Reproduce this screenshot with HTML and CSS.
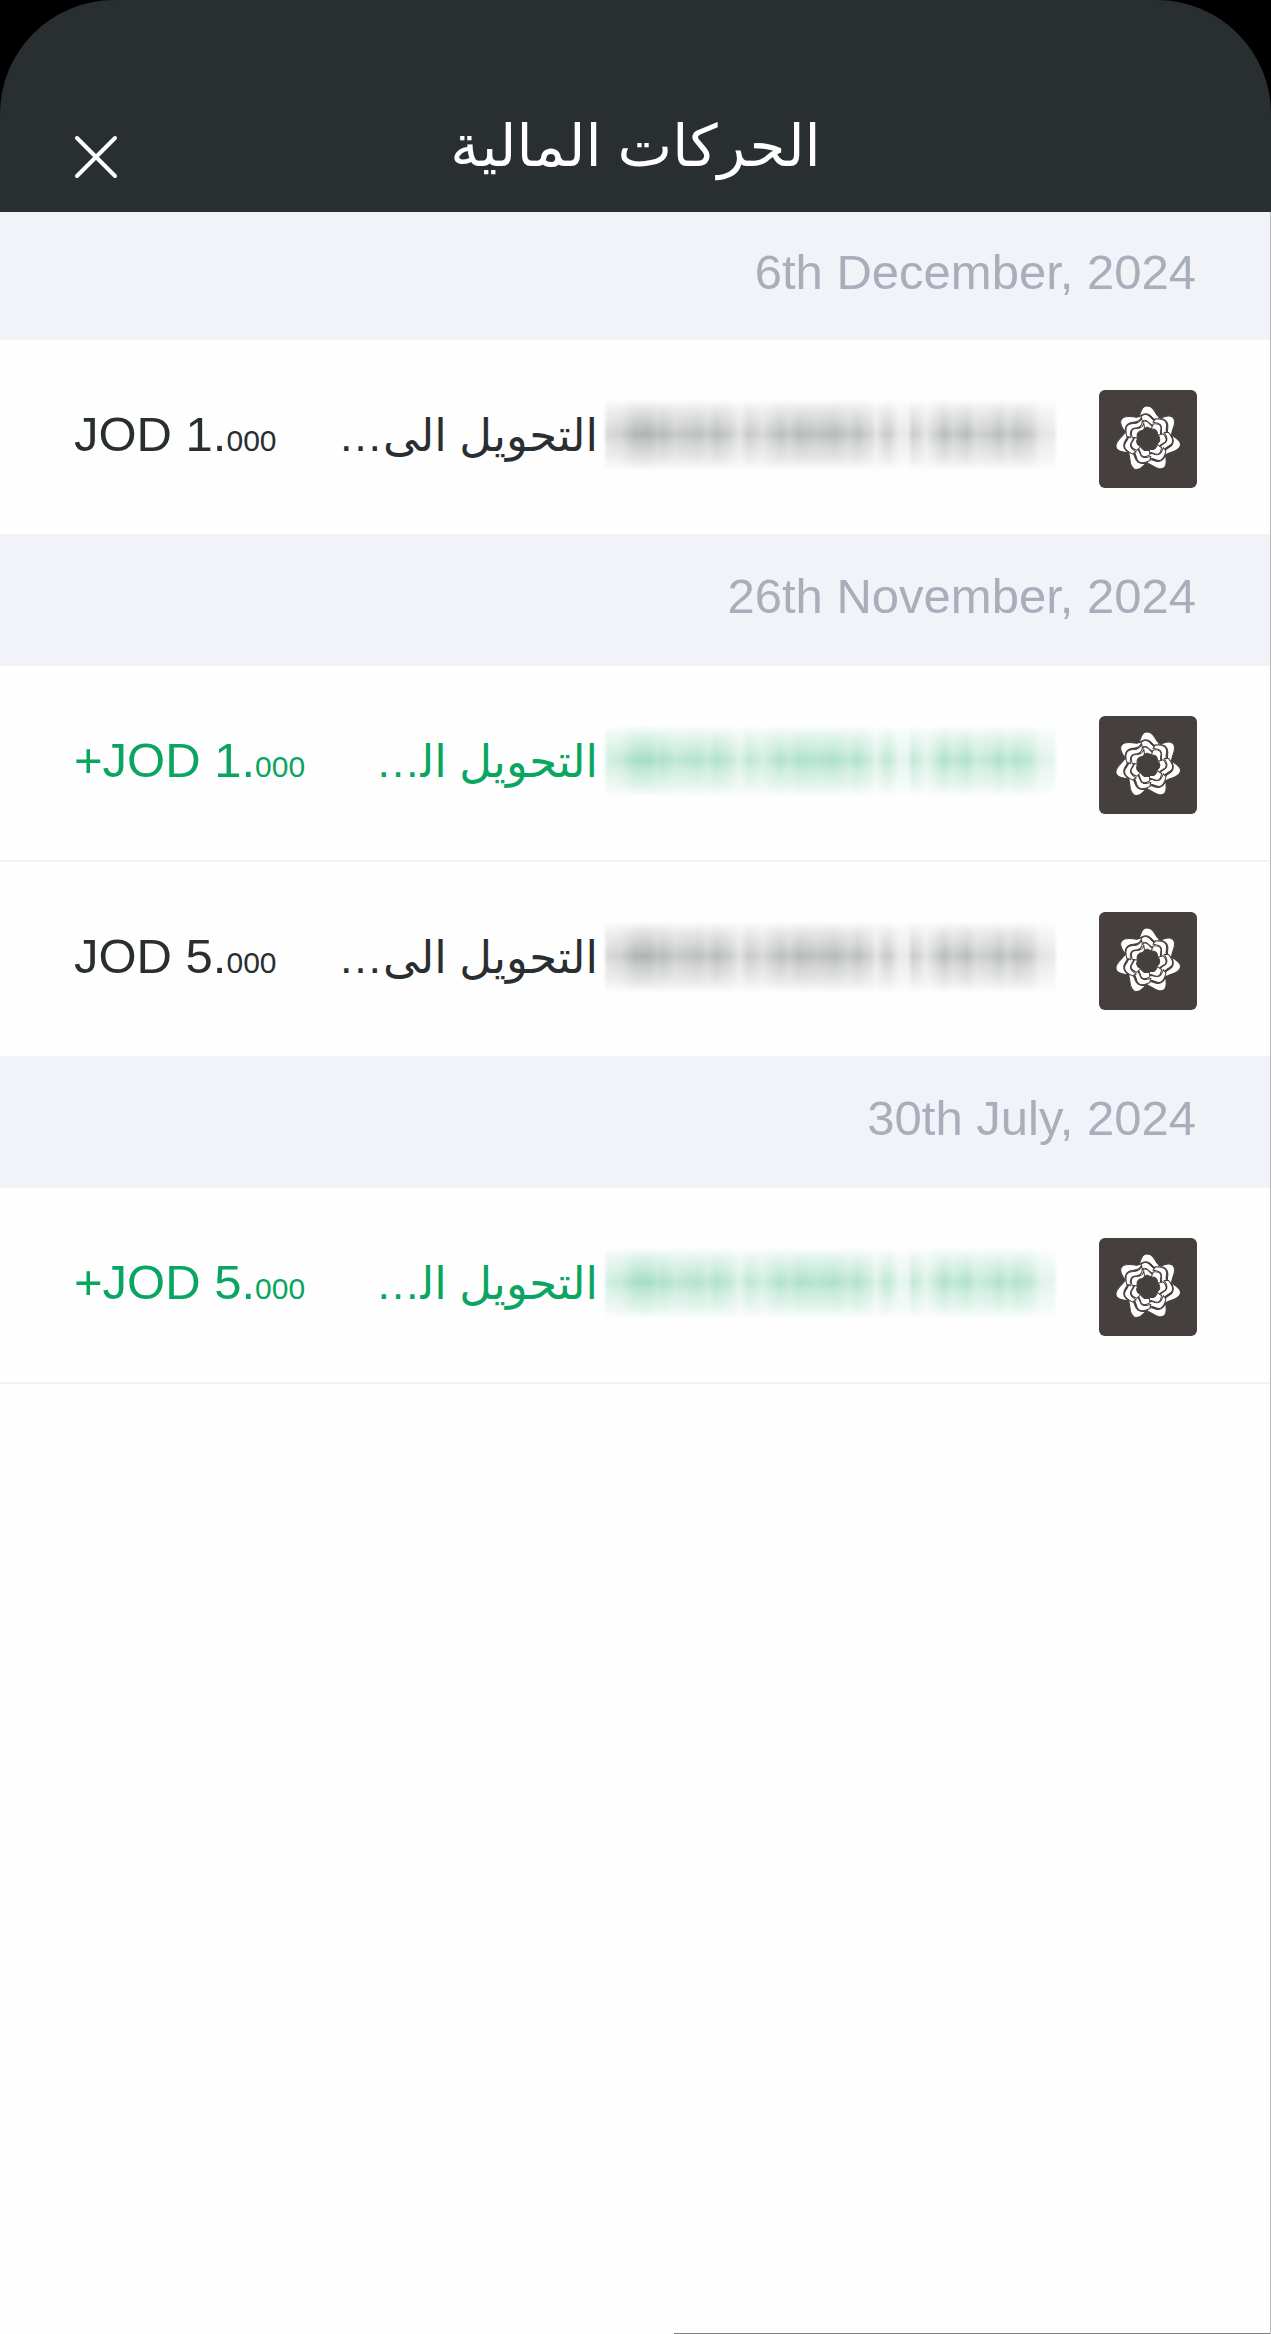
FILE: index.html
```html
<!DOCTYPE html>
<html lang="ar" dir="rtl">
<head>
    <meta charset="UTF-8">
    <meta name="viewport" content="width=device-width, initial-scale=1.0">
    <title>الحركات المالية</title>
    <link rel="stylesheet" href="styles.css">
</head>
<body>
    <svg class="sprite" aria-hidden="true">
        <symbol id="flower" viewBox="-49 -49 98 98">
            <g id="petal">
                <path d="M-10,-21 C-7,-24.5 -7,-33 -1,-33 C5,-33 7,-26 10,-22.5 C12,-20.5 13,-20 14.5,-19.5 C11,-17.5 7,-18.5 4,-22 C0,-26.5 -5,-26.5 -10,-21Z"/>
                <path d="M-11,-18.5 C-5,-26 -1,-26 3,-21 C6,-17.5 9,-17 12.5,-18 C9,-13.5 5,-12.5 2,-15.5 C-2,-20 -5,-19.5 -10,-14.5Z"/>
                <path d="M-8.5,-13.5 C-5,-19 -1.5,-19 1,-15.5 C4,-12 6,-11.5 9.5,-13 C7,-9.5 5,-8.5 3,-10 C0,-12.5 -3,-12.5 -6,-9Z"/>
            </g>
            <use href="#petal" transform="rotate(51.43)"/>
            <use href="#petal" transform="rotate(102.86)"/>
            <use href="#petal" transform="rotate(154.29)"/>
            <use href="#petal" transform="rotate(205.71)"/>
            <use href="#petal" transform="rotate(257.14)"/>
            <use href="#petal" transform="rotate(308.57)"/>
        </symbol>
    </svg>

    <div class="screen">
        <div class="top">
            <header class="header">
                <h1>الحركات المالية</h1>
                <button class="close" type="button" aria-label="إغلاق">
                    <svg viewBox="0 0 44 44"><path d="M3 3L41 41M41 3L3 41"/></svg>
                </button>
            </header>
        </div>

        <main class="list">
            <h2 class="date" dir="ltr">6th December, 2024</h2>
            <div class="row">
                <svg class="logo"><use href="#flower"/></svg>
                <span class="hidden-name"></span>
                <span class="name">التحويل الى…</span>
                <span class="amount" dir="ltr">JOD 1.<small>000</small></span>
            </div>

            <h2 class="date" dir="ltr">26th November, 2024</h2>
            <div class="row plus">
                <svg class="logo"><use href="#flower"/></svg>
                <span class="hidden-name"></span>
                <span class="name">التحويل ال&zwj;…</span>
                <span class="amount" dir="ltr">+JOD 1.<small>000</small></span>
            </div>
            <div class="row">
                <svg class="logo"><use href="#flower"/></svg>
                <span class="hidden-name"></span>
                <span class="name">التحويل الى…</span>
                <span class="amount" dir="ltr">JOD 5.<small>000</small></span>
            </div>

            <h2 class="date" dir="ltr">30th July, 2024</h2>
            <div class="row plus">
                <svg class="logo"><use href="#flower"/></svg>
                <span class="hidden-name"></span>
                <span class="name">التحويل ال&zwj;…</span>
                <span class="amount" dir="ltr">+JOD 5.<small>000</small></span>
            </div>
        </main>
    </div>
</body>
</html>
```
FILE: styles.css
```css
* {
    margin: 0;
    padding: 0;
    box-sizing: border-box;
}
body {
    background-color: #fefefe;
    font-family: "Liberation Sans", "DejaVu Sans", sans-serif;
    font-size: 49px;
    color: #292e31;
}
.sprite {
    position: absolute;
    width: 0;
    height: 0;
}
.screen {
    display: flex;
    flex-direction: column;
    min-height: 100vh;
    background: linear-gradient(to left, #808080 47%, transparent 47%) bottom / 100% 1px no-repeat;
}
.top {
    background-color: #000;
}
.header {
    display: grid;
    grid-template-columns: 44px 1fr 44px;
    align-items: end;
    height: 212px;
    padding: 0 74px 33px;
    border-radius: 114px 114px 0 0;
    background-color: #292e31;
    color: #fff;
}
.header h1 {
    grid-column: 2;
    font-size: 58px;
    font-weight: normal;
    line-height: 66px;
    text-align: center;
}
.close {
    width: 44px;
    height: 44px;
    border: none;
    background: none;
    color: inherit;
    cursor: pointer;
}
.close svg {
    display: block;
    fill: none;
    stroke: currentColor;
    stroke-width: 4;
    stroke-linecap: round;
}
.list {
    flex: 1;
    border-right: 1px solid #b8b8b8;
}
.date {
    height: 130px;
    padding: 32px 74px 0;
    background-color: #f2f3f8;
    color: #a9aebb;
    font-weight: normal;
    font-size: 49px;
    line-height: 56px;
    text-align: right;
}
.date:first-child {
    height: 128px;
}
.row {
    display: flex;
    align-items: center;
    height: 196px;
    padding: 4px 73px 0 74px;
    border-bottom: 2px solid #f2f3f8;
}
.plus {
    color: #09a561;
}
.logo {
    flex: none;
    width: 98px;
    height: 98px;
    margin-left: 41px;
    border-radius: 6px;
    background-color: #453f3d;
    fill: #fff;
    stroke: #453f3d;
    stroke-width: 1;
}
/* smudged account name, takes the colour of its row */
.hidden-name {
    flex: 0 1 455px;
    height: 72px;
    margin-bottom: 8px;
    background-color: currentColor;
    mask-image:
        linear-gradient(to bottom, transparent, rgba(0, 0, 0, 0.35) 14%, rgba(0, 0, 0, 0.7) 34%, #000 49%, rgba(0, 0, 0, 0.7) 62%, rgba(0, 0, 0, 0.35) 84%, transparent),
        linear-gradient(to right,
            transparent, rgba(0, 0, 0, 0.18) 1%, rgba(0, 0, 0, 0.22) 4%, rgba(0, 0, 0, 0.35) 7%,
            rgba(0, 0, 0, 0.37) 10%, rgba(0, 0, 0, 0.3) 12%, rgba(0, 0, 0, 0.33) 13%, rgba(0, 0, 0, 0.25) 16%,
            rgba(0, 0, 0, 0.3) 21%, rgba(0, 0, 0, 0.25) 23%, rgba(0, 0, 0, 0.32) 25%, rgba(0, 0, 0, 0.24) 28%,
            rgba(0, 0, 0, 0.14) 30%, rgba(0, 0, 0, 0.25) 32%, rgba(0, 0, 0, 0.24) 33%, rgba(0, 0, 0, 0.18) 35%,
            rgba(0, 0, 0, 0.31) 39%, rgba(0, 0, 0, 0.26) 41%, rgba(0, 0, 0, 0.33) 43%, rgba(0, 0, 0, 0.29) 47%,
            rgba(0, 0, 0, 0.33) 51%, rgba(0, 0, 0, 0.25) 54%, rgba(0, 0, 0, 0.31) 56%, rgba(0, 0, 0, 0.2) 59%,
            rgba(0, 0, 0, 0.12) 60%, rgba(0, 0, 0, 0.24) 62%, rgba(0, 0, 0, 0.24) 63%, rgba(0, 0, 0, 0.1) 65%,
            rgba(0, 0, 0, 0.1) 67%, rgba(0, 0, 0, 0.24) 68%, rgba(0, 0, 0, 0.22) 69%, rgba(0, 0, 0, 0.12) 71%,
            rgba(0, 0, 0, 0.32) 75%, rgba(0, 0, 0, 0.24) 77%, rgba(0, 0, 0, 0.32) 80%, rgba(0, 0, 0, 0.22) 82%,
            rgba(0, 0, 0, 0.25) 85%, rgba(0, 0, 0, 0.32) 87%, rgba(0, 0, 0, 0.24) 89%, rgba(0, 0, 0, 0.31) 91%,
            rgba(0, 0, 0, 0.25) 94%, rgba(0, 0, 0, 0.13) 96%, rgba(0, 0, 0, 0.1) 99%, transparent);
    mask-composite: intersect;
}
.name {
    flex: 1;
    margin-right: 5px;
    padding-bottom: 6px;
    font-size: 45px;
    line-height: 64px;
    white-space: nowrap;
}
.amount {
    padding-bottom: 4px;
    line-height: 64px;
    white-space: nowrap;
}
.amount small {
    font-size: 30px;
}
```
